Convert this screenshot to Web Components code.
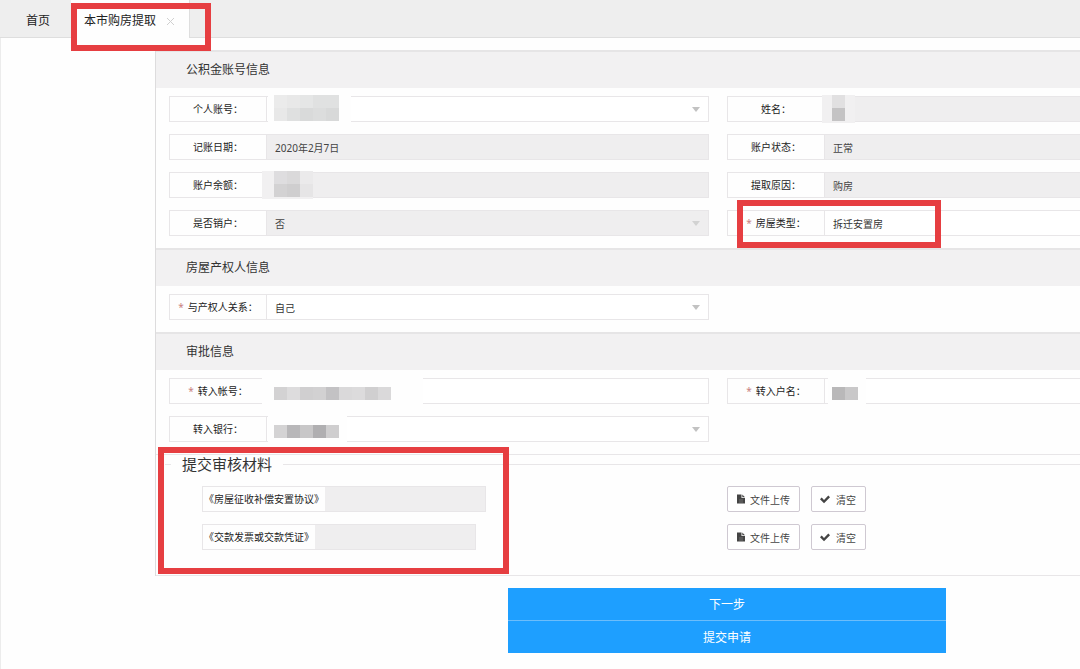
<!DOCTYPE html>
<html lang="zh-CN">
<head>
<meta charset="utf-8">
<meta name="viewport" content="width=device-width, initial-scale=1">
<title>本市购房提取</title>
<style>
  * {
    box-sizing: border-box;
  }

  body {
    margin: 0;
    font-family: "Noto Sans", "Noto Sans CJK SC", sans-serif;
    font-size: 10px;
    color: #333;
    background: #fefefe;
    overflow-x: hidden;
    --line: #e8e6e8;
    --fill: #efeeef;
    --mark: #e63e41;
  }
</style>
</head>
<body>
<withdraw-page>
  <tab-bar slot="tabs">
    <tab-item>首页</tab-item>
    <tab-item active>本市购房提取<mark-box slot="mark" style="--inset: 3px -22px -13px 0"></mark-box></tab-item>
  </tab-bar>

  <form-section heading="公积金账号信息">
    <form-field label="个人账号" type="select" value=" ">
      <mosaic-mask columns="5" wash="6px 12px" cells="#ebebeb #e8e8e8 #e5e6e6 #e0e1e1 #e0e1e1 #e8e8e8 #dfe0e0 #d9dada #dcdddd #d8d9d9"></mosaic-mask>
    </form-field>
    <form-field label="姓名" disabled>
      <mosaic-mask columns="1" tint="#f1f0f1" wash="10px 10px" cells="#e1e0e1 #c4c3c4"></mosaic-mask>
    </form-field>
    <form-field label="记账日期" value="2020年2月7日" disabled></form-field>
    <form-field label="账户状态" value="正常" disabled></form-field>
    <form-field label="账户余额" disabled>
      <mosaic-mask columns="3" tint="#f1f0f1" wash="12px 0px" cells="#dedddf #dad9da #ebeaeb #d3d2d3 #cfcecf #e6e5e6"></mosaic-mask>
    </form-field>
    <form-field label="提取原因" value="购房" disabled></form-field>
    <form-field label="是否销户" type="select" value="否" disabled></form-field>
    <form-field label="房屋类型" type="select" value="拆迁安置房" required>
      <mark-box slot="mark" style="--inset: -11px auto -13px 9px; --width: 204px"></mark-box>
    </form-field>
  </form-section>

  <form-section heading="房屋产权人信息">
    <form-field label="与产权人关系" type="select" value="自己" required></form-field>
  </form-section>

  <form-section heading="审批信息">
    <form-field label="转入帐号" required>
      <mosaic-mask columns="9" wash="12px 32px" cells="#d3d2d3 #dddcdd #d0cfd0 #d2d1d2 #c3c2c4 #dad9da #dcdbdc #d0cfd0 #dad9da"></mosaic-mask>
    </form-field>
    <form-field label="转入户名" required>
      <mosaic-mask columns="2" wash="4px 8px" cells="#b9b8b9 #c9c8c9"></mosaic-mask>
    </form-field>
    <form-field label="转入银行" type="select" value=" ">
      <mosaic-mask columns="5" wash="6px 8px" cells="#d4d3d4 #b8b7b9 #c8c7c8 #b0afb1 #cfcecf"></mosaic-mask>
    </form-field>
  </form-section>

  <material-list heading="提交审核材料">
    <material-row label="《房屋征收补偿安置协议》"></material-row>
    <material-row label="《交款发票或交款凭证》"></material-row>
    <mark-box slot="mark" style="--inset: -8px auto 1px 2px; --width: 351px"></mark-box>
  </material-list>

  <submit-button slot="actions">下一步</submit-button>
  <submit-button slot="actions">提交申请</submit-button>
</withdraw-page>

<script>
const resetStyle = `
  *, :host {
    box-sizing: border-box;
  }
  input, select, button {
    margin: 0;
    font: inherit;
    color: inherit;
    outline: 0;
  }
`;

class WithdrawPage extends HTMLElement {
  connectedCallback() {
    this.attachShadow({ mode: "open" }).innerHTML = `
    <style>
      ${resetStyle}
      :host {
        display: block;
      }
      .body {
        display: flex;
        padding-top: 12px;
        overflow: hidden;
        border-left: 1px solid #ececec;
      }
      aside {
        flex: 0 0 154px;
      }
      form {
        flex: 1 0 auto;
        min-width: 1144px;
      }
      .panel {
        border-left: 1px solid #dddcdd;
      }
      .actions {
        display: flex;
        flex-direction: column;
        gap: 1px;
        width: 438px;
        margin: 12px auto 16px;
        background: #6cbdfb;
      }
    </style>
    <slot name="tabs"></slot>
    <div class="body">
      <aside></aside>
      <form>
        <div class="panel"><slot></slot></div>
        <div class="actions"><slot name="actions"></slot></div>
      </form>
    </div>
    `;
  }
}

class TabBar extends HTMLElement {
  connectedCallback() {
    this.attachShadow({ mode: "open" }).innerHTML = `
    <style>
      ${resetStyle}
      :host {
        display: block;
        background: #eeeeee;
        border-bottom: 1px solid #dedede;
      }
      nav {
        display: flex;
        height: 37px;
      }
    </style>
    <nav><slot></slot></nav>
    `;
  }
}

class TabItem extends HTMLElement {
  connectedCallback() {
    const active = this.hasAttribute("active");
    this.attachShadow({ mode: "open" }).innerHTML = `
    <style>
      ${resetStyle}
      :host {
        position: relative;
        display: flex;
        align-items: center;
        padding-top: 4px;
        font-size: 12px;
        color: #222;
      }
      :host(:first-child) {
        padding: 4px 21px 0 26px;
      }
      :host([active]) {
        height: 38px;
        padding: 4px 14px 0 13px;
        background: #fefefe;
        border-right: 1px solid #dedede;
      }
      a {
        color: inherit;
        text-decoration: none;
        line-height: 32px;
      }
      button {
        display: flex;
        padding: 0;
        margin-left: 10px;
        border: 0;
        background: none;
      }
      svg {
        width: 9px;
        height: 9px;
        stroke: #d0d0d0;
      }
    </style>
    <a href="#"><slot></slot></a>
    ${active ? `<button type="button" aria-label="关闭">
      <svg viewBox="0 0 9 9"><path d="M1 1l7 7M8 1l-7 7"/></svg>
    </button>` : ""}
    <slot name="mark"></slot>
    `;
  }
}

// red outline laid over the part that needs attention
class MarkBox extends HTMLElement {
  connectedCallback() {
    this.attachShadow({ mode: "open" }).innerHTML = `
    <style>
      :host {
        box-sizing: border-box;
        position: absolute;
        inset: var(--inset);
        width: var(--width, auto);
        border: 6px solid var(--mark);
        pointer-events: none;
        z-index: 2;
      }
    </style>
    `;
  }
}

class FormSection extends HTMLElement {
  connectedCallback() {
    this.attachShadow({ mode: "open" }).innerHTML = `
    <style>
      ${resetStyle}
      :host {
        display: block;
      }
      h2 {
        margin: 0;
        padding-left: 30px;
        border-top: 2px solid #e6e5e6;
        background: #f2f1f2;
        font-size: 12px;
        font-weight: normal;
        line-height: 36px;
      }
      .grid {
        display: grid;
        grid-template-columns: 1fr 1fr;
        gap: 12px 18px;
        padding: 8px 32px 12px 13px;
      }
    </style>
    <h2>${this.getAttribute("heading")}</h2>
    <div class="grid"><slot></slot></div>
    `;
  }
}

class FormField extends HTMLElement {
  connectedCallback() {
    const value = this.getAttribute("value") || "";
    const disabled = this.hasAttribute("disabled") ? "disabled" : "";
    const required = this.hasAttribute("required");
    const control = this.getAttribute("type") === "select"
      ? `<select id="control" ${disabled}><option>${value}</option></select><i></i>`
      : `<input id="control" type="text" value="${value}" ${disabled}>`;

    this.attachShadow({ mode: "open" }).innerHTML = `
    <style>
      ${resetStyle}
      :host {
        position: relative;
        display: flex;
        height: 26px;
        border: 1px solid var(--line);
      }
      label {
        flex: 0 0 97px;
        text-align: center;
        line-height: 24px;
        border-right: 1px solid var(--line);
        color: #222;
      }
      label span {
        color: #c98080;
        margin-right: 4px;
      }
      .control {
        position: relative;
        flex: 1;
        display: flex;
      }
      input, select {
        flex: 1;
        width: 100%;
        padding: 0 8px;
        border: 0;
        border-radius: 0;
        background: #fff;
        appearance: none;
        opacity: 1;
      }
      select {
        padding-top: 2px;
      }
      input:disabled, select:disabled {
        background: var(--fill);
        color: #444;
      }
      i {
        position: absolute;
        right: 8px;
        top: 10px;
        border: 4px solid transparent;
        border-top: 5px solid #c2c2c2;
        border-bottom: 0;
        pointer-events: none;
      }
      select:disabled + i {
        border-top-color: #d2d2d2;
      }
    </style>
    <label for="control">${required ? "<span>*</span>" : ""}${this.getAttribute("label")}：</label>
    <div class="control">${control}<slot></slot></div>
    <slot name="mark"></slot>
    `;
  }
}

// pixelated cover over private values, with a faint wash on both sides
class MosaicMask extends HTMLElement {
  connectedCallback() {
    const columns = Number(this.getAttribute("columns"));
    const cells = this.getAttribute("cells").split(" ");
    const tall = cells.length > columns;
    const [left, right] = this.getAttribute("wash").split(" ");

    this.attachShadow({ mode: "open" }).innerHTML = `
    <style>
      :host {
        position: absolute;
        left: calc(7px - ${left});
        top: -2px;
        display: grid;
        grid-template-columns: repeat(${columns}, 13px);
        grid-auto-rows: 13px;
        padding: ${tall ? "0" : "10px"} ${right} ${tall ? "2px" : "5px"} ${left};
        background: ${this.getAttribute("tint") || "#fefefe"};
      }
    </style>
    ${cells.map((color) => `<span style="background: ${color}"></span>`).join("")}
    `;
  }
}

class MaterialList extends HTMLElement {
  connectedCallback() {
    this.attachShadow({ mode: "open" }).innerHTML = `
    <style>
      ${resetStyle}
      :host {
        position: relative;
        display: block;
        border-top: 1px solid var(--line);
        border-bottom: 1px solid var(--line);
      }
      fieldset {
        margin: 0 0 0 9px;
        padding: 0;
        border: 0;
        min-width: 0;
      }
      legend {
        display: flex;
        align-items: center;
        gap: 11px;
        width: 100%;
        padding: 0;
        font-size: 15px;
        line-height: 18px;
      }
      legend::before, legend::after {
        content: "";
        height: 1px;
        background: var(--line);
      }
      legend::before {
        width: 6px;
      }
      legend::after {
        flex: 1;
      }
      .rows {
        display: grid;
        gap: 12px;
        padding: 13px 32px 25px 4px;
      }
    </style>
    <fieldset>
      <legend>${this.getAttribute("heading")}</legend>
      <div class="rows"><slot></slot></div>
    </fieldset>
    <slot name="mark"></slot>
    `;
  }
}

class MaterialRow extends HTMLElement {
  connectedCallback() {
    this.attachShadow({ mode: "open" }).innerHTML = `
    <style>
      ${resetStyle}
      :host {
        display: grid;
        grid-template-columns: 1fr 1fr;
        gap: 18px;
      }
      .file {
        display: flex;
        justify-self: start;
        height: 26px;
        margin-left: 33px;
        border: 1px solid var(--line);
      }
      label {
        padding: 0 1px;
        line-height: 24px;
        color: #222;
      }
      input {
        width: 160px;
        border: 0;
        background: var(--fill);
      }
      .buttons {
        display: flex;
        gap: 11px;
      }
      button {
        display: flex;
        align-items: center;
        gap: 4px;
        height: 26px;
        padding: 0 9px 0 8px;
        border: 1px solid #cfc9d2;
        border-radius: 2px;
        background: #fff;
        color: #444;
      }
      svg {
        width: 10px;
        height: 10px;
        fill: #444;
      }
      .clear {
        gap: 6px;
      }
    </style>
    <div class="file">
      <label for="file">${this.getAttribute("label")}</label>
      <input id="file" type="text" disabled>
    </div>
    <div class="buttons">
      <button type="button">
        <svg viewBox="0 0 10 10"><path d="M1 .5h4.500v3.500H9v5.500H1zM6.300.5L9 3.200H6.300z"/><path d="M3 6h4M3 8h4" stroke="#999" stroke-width=".5"/></svg>
        文件上传
      </button>
      <button type="button" class="clear">
        <svg viewBox="0 0 10 10"><path d="M0 5.300L1.700 3.600 4 5.900 8.300 1.600 10 3.300 4 9.300z"/></svg>
        清空
      </button>
    </div>
    `;
  }
}

class SubmitButton extends HTMLElement {
  connectedCallback() {
    this.attachShadow({ mode: "open" }).innerHTML = `
    <style>
      ${resetStyle}
      :host {
        display: block;
      }
      button {
        display: block;
        width: 100%;
        height: 32px;
        padding: 0;
        border: 0;
        background: #1e9fff;
        color: #fff;
        font-size: 12px;
        cursor: pointer;
      }
    </style>
    <button type="button"><slot></slot></button>
    `;
  }
}

customElements.define("withdraw-page", WithdrawPage);
customElements.define("tab-bar", TabBar);
customElements.define("tab-item", TabItem);
customElements.define("mark-box", MarkBox);
customElements.define("form-section", FormSection);
customElements.define("form-field", FormField);
customElements.define("mosaic-mask", MosaicMask);
customElements.define("material-list", MaterialList);
customElements.define("material-row", MaterialRow);
customElements.define("submit-button", SubmitButton);
</script>
</body>
</html>
